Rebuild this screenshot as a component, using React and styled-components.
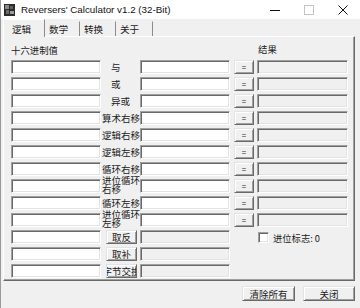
import React from 'react';
import styled, { createGlobalStyle } from 'styled-components';

const GlobalStyle = createGlobalStyle`
  html, body {
    margin: 0;
    padding: 0;
    background: #f0f0f0;
  }
  body {
    font-family: "Noto Sans CJK SC", "Liberation Sans", sans-serif;
    color: #000;
  }
`;

const CJK = '"Noto Sans CJK SC", "Noto Sans", sans-serif';

const Window = styled.div`
  width: 360px;
  height: 308px;
  display: flex;
  flex-direction: column;
  background: #f0f0f0;
  box-sizing: border-box;
  border-left: 1px solid #9a9a9a;
  overflow: hidden;
`;

const TitleBar = styled.div`
  height: 19px;
  flex: none;
  display: flex;
  align-items: center;
  background: #fff;
  padding-left: 3px;
`;

const TitleText = styled.span`
  margin-left: 6px;
  font-family: "Liberation Sans", Arial, sans-serif;
  font-size: 9.8px;
  color: #111;
  white-space: nowrap;
`;

const Controls = styled.div`
  margin-left: auto;
  display: flex;
  align-items: center;
  height: 100%;
`;

const ControlBox = styled.div`
  width: 34px;
  height: 100%;
  display: flex;
  align-items: center;
  justify-content: center;
`;

const TabStrip = styled.div`
  height: 17px;
  flex: none;
  display: flex;
  align-items: flex-end;
  padding-left: 2px;
  position: relative;
  z-index: 1;
`;

const Tab = styled.div`
  box-sizing: border-box;
  height: ${({ $active }) => ($active ? '18px' : '15px')};
  margin-bottom: ${({ $active }) => ($active ? '-1px' : '0')};
  width: ${({ $w }) => $w}px;
  padding-left: ${({ $active }) => ($active ? '8px' : '3px')};
  display: flex;
  align-items: center;
  font-family: ${CJK};
  font-size: 9.6px;
  line-height: 10px;
  color: #1a1a1a;
  background: #f0f0f0;
  border-top: 1px solid ${({ $active }) => ($active ? '#fff' : '#f0f0f0')};
  border-left: 1px solid ${({ $active }) => ($active ? '#fff' : '#f0f0f0')};
  border-right: 1px solid #8c8c8c;
`;

const Panel = styled.div`
  box-sizing: border-box;
  height: 245px;
  margin: 0 5px 0 2px;
  flex: none;
  border-top: 1px solid #fff;
  border-left: 1px solid #fff;
  border-right: 1px solid #696969;
  border-bottom: 1px solid #696969;
  box-shadow: inset -1px -1px 0 #a0a0a0;
  padding: 6px 0 0 7px;
`;

const Grid = styled.div`
  display: grid;
  grid-template-columns: 90px 39px 90px 24px 94px;
  grid-auto-rows: 14px;
  row-gap: 3px;
`;

const Heading = styled.div`
  font-family: ${CJK};
  font-size: 9.4px;
  line-height: 14px;
  color: #1a1a1a;
  grid-column: ${({ $col }) => $col};
  padding-left: ${({ $indent }) => $indent || 0}px;
  margin-top: ${({ $up }) => ($up ? '-1px' : '0')};
  white-space: nowrap;
`;

const Field = styled.div`
  box-sizing: border-box;
  height: 14px;
  width: ${({ $w }) => $w || 90}px;
  justify-self: ${({ $end }) => ($end ? 'end' : 'start')};
  background: ${({ $readOnly }) => ($readOnly ? '#f0f0f0' : '#fff')};
  border-top: 1px solid #a0a0a0;
  border-left: 1px solid #a0a0a0;
  border-right: 1px solid #fff;
  border-bottom: 1px solid #fff;
  box-shadow: inset 1px 1px 0 #696969, inset -1px -1px 0 #e3e3e3;
`;

const OpLabel = styled.div`
  font-family: ${CJK};
  font-size: 9.5px;
  line-height: ${({ $wrap }) => ($wrap ? '8.5px' : '14px')};
  color: #1a1a1a;
  padding-left: ${({ $indent }) => $indent}px;
  margin-top: ${({ $wrap }) => ($wrap ? '-3px' : '0')};
  align-self: start;
  white-space: ${({ $wrap }) => ($wrap ? 'normal' : 'nowrap')};
  width: 39px;
  box-sizing: border-box;
`;

const RaisedButton = styled.button`
  box-sizing: border-box;
  margin: 0;
  padding: 0;
  height: ${({ $h }) => $h || 14}px;
  width: ${({ $w }) => $w}px;
  justify-self: ${({ $justify }) => $justify || 'start'};
  margin-left: ${({ $ml }) => $ml || 0}px;
  display: flex;
  align-items: center;
  justify-content: center;
  overflow: hidden;
  white-space: nowrap;
  background: #f0f0f0;
  font-family: ${CJK};
  font-size: ${({ $fs }) => $fs || 9.5}px;
  line-height: 12px;
  color: #1a1a1a;
  border-top: 1px solid #e3e3e3;
  border-left: 1px solid #e3e3e3;
  border-right: 1px solid #696969;
  border-bottom: 1px solid #696969;
  box-shadow: inset 1px 1px 0 #fff, inset -1px -1px 0 #a0a0a0;
`;

const CarryFlag = styled.label`
  grid-column: 5;
  display: flex;
  align-items: center;
  padding-left: 4px;
  font-family: ${CJK};
  font-size: 9.3px;
  line-height: 14px;
  color: #1a1a1a;
  margin-top: 1px;
  white-space: nowrap;
`;

const CheckBox = styled.span`
  box-sizing: border-box;
  width: 11px;
  height: 11px;
  margin-right: 4px;
  background: #fff;
  border-top: 1px solid #a0a0a0;
  border-left: 1px solid #a0a0a0;
  border-right: 1px solid #fff;
  border-bottom: 1px solid #fff;
  box-shadow: inset 1px 1px 0 #696969, inset -1px -1px 0 #e3e3e3;
`;

const Spacer = styled.span`
  grid-column: 4 / span 2;
`;

const Footer = styled.div`
  flex: 1;
  display: flex;
  justify-content: flex-end;
  align-items: flex-start;
  gap: 8px;
  padding: 5px 5px 0 0;
`;

const AppIcon = () => (
  <svg width="11" height="12" viewBox="0 0 11 12">
    <rect width="11" height="12" fill="#2b2b2b" />
    <rect x="1" y="1" width="4" height="4" fill="#8a8a8a" />
    <rect x="6" y="2" width="3" height="3" fill="#5e5e5e" />
    <rect x="2" y="6" width="3" height="4" fill="#6e6e6e" />
    <rect x="6" y="7" width="4" height="3" fill="#9b9b9b" />
  </svg>
);

const ops = [
  { op: '与', indent: 10 },
  { op: '或', indent: 10 },
  { op: '异或', indent: 10 },
  { op: '算术右移', indent: 1 },
  { op: '逻辑右移', indent: 1 },
  { op: '逻辑左移', indent: 1 },
  { op: '循环右移', indent: 1 },
  { op: '进位循环右移', indent: 1, wrap: true },
  { op: '循环左移', indent: 1 },
  { op: '进位循环左移', indent: 1, wrap: true },
];

const unary = ['取反', '取补', '字节交换'];

const tabs = [
  { name: '逻辑', w: 42, active: true },
  { name: '数学', w: 35 },
  { name: '转换', w: 36 },
  { name: '关于', w: 37 },
];

const App = () => (
  <>
    <GlobalStyle />
    <Window>
      <TitleBar>
        <AppIcon />
        <TitleText>Reversers&apos; Calculator v1.2 (32-Bit)</TitleText>
        <Controls>
          <ControlBox>
            <svg width="10" height="10" viewBox="0 0 10 10">
              <line x1="0" y1="5.5" x2="10" y2="5.5" stroke="#111" strokeWidth="1" />
            </svg>
          </ControlBox>
          <ControlBox>
            <svg width="10" height="10" viewBox="0 0 10 10">
              <rect x="0.5" y="0.5" width="9" height="9" fill="none" stroke="#c4c4c4" strokeWidth="1" />
            </svg>
          </ControlBox>
          <ControlBox>
            <svg width="10" height="10" viewBox="0 0 10 10">
              <path d="M0.5 0.5 L9.5 9.5 M9.5 0.5 L0.5 9.5" stroke="#111" strokeWidth="1" />
            </svg>
          </ControlBox>
        </Controls>
      </TitleBar>
      <TabStrip>
        {tabs.map((t) => (
          <Tab key={t.name} $w={t.w} $active={t.active}>{t.name}</Tab>
        ))}
      </TabStrip>
      <Panel>
        <Grid>
          <Heading $col="1 / span 2">十六进制值</Heading>
          <Heading $col="5" $indent={4} $up>结果</Heading>
          {ops.map((o) => (
            <React.Fragment key={o.op}>
              <Field />
              <OpLabel $indent={o.indent} $wrap={o.wrap}>{o.op}</OpLabel>
              <Field />
              <RaisedButton $w={20} $justify="end" $fs={8}>=</RaisedButton>
              <Field $w={91} $end $readOnly />
            </React.Fragment>
          ))}
          {unary.map((u, i) => (
            <React.Fragment key={u}>
              <Field />
              <RaisedButton $w={31} $ml={5}>{u}</RaisedButton>
              <Field $readOnly />
              {i === 0 ? (
                <CarryFlag>
                  <CheckBox />
                  进位标志:&nbsp;0
                </CarryFlag>
              ) : (
                <Spacer />
              )}
            </React.Fragment>
          ))}
        </Grid>
      </Panel>
      <Footer>
        <RaisedButton $w={53} $h={15}>清除所有</RaisedButton>
        <RaisedButton $w={52} $h={15}>关闭</RaisedButton>
      </Footer>
    </Window>
  </>
);

export default App;
